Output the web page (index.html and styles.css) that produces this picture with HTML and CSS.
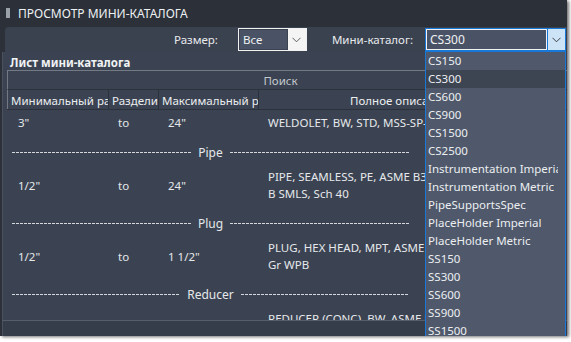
FILE: index.html
```html
<!DOCTYPE html>
<html lang="ru">
<head>
<meta charset="utf-8">
<link rel="stylesheet" href="styles.css">
</head>
<body>
<div class="window">
  <div class="titlebar">
    <span class="grip"></span>
    <span class="title">ПРОСМОТР МИНИ-КАТАЛОГА</span>
  </div>
  <div class="toolbar">
    <span class="lbl lbl-size">Размер:</span>
    <div class="select sel-size">
      <span class="val">Все</span>
      <span class="arrow"><svg width="9" height="6" viewBox="0 0 9 6"><path d="M0.5 0.8 L4.5 4.8 L8.5 0.8" fill="none" stroke="#5a5f66" stroke-width="1"/></svg></span>
    </div>
    <span class="lbl lbl-cat">Мини-каталог:</span>
    <div class="select sel-cat">
      <span class="val">CS300</span>
      <span class="arrow"><svg width="9" height="6" viewBox="0 0 9 6"><path d="M0.5 0.8 L4.5 4.8 L8.5 0.8" fill="none" stroke="#3c4048" stroke-width="1"/></svg></span>
    </div>
  </div>
  <div class="sheet">
    <div class="sheet-title">Лист мини-каталога</div>
    <div class="grid">
      <div class="search">Поиск</div>
      <div class="hdr">
        <div class="c c1">Минимальный размер</div>
        <div class="c c2">Разделитель</div>
        <div class="c c3">Максимальный размер</div>
        <div class="c c4 center">Полное описание</div>
      </div>
      <div class="row">
        <div class="c c1">3"</div>
        <div class="c c2">to</div>
        <div class="c c3">24"</div>
        <div class="c c4">WELDOLET, BW, STD, MSS-SP-97</div>
      </div>
      <div class="sep"><span class="dash"></span><span class="sep-lbl">Pipe</span><span class="dash"></span></div>
      <div class="row">
        <div class="c c1">1/2"</div>
        <div class="c c2">to</div>
        <div class="c c3">24"</div>
        <div class="c c4 wrap">PIPE, SEAMLESS, PE, ASME B36<br>B SMLS, Sch 40</div>
      </div>
      <div class="sep"><span class="dash"></span><span class="sep-lbl">Plug</span><span class="dash"></span></div>
      <div class="row">
        <div class="c c1">1/2"</div>
        <div class="c c2">to</div>
        <div class="c c3">1 1/2"</div>
        <div class="c c4 wrap">PLUG, HEX HEAD, MPT, ASME B16<br>Gr WPB</div>
      </div>
      <div class="sep"><span class="dash"></span><span class="sep-lbl">Reducer</span><span class="dash"></span></div>
      <div class="row">
        <div class="c c1"></div>
        <div class="c c2"></div>
        <div class="c c3"></div>
        <div class="c c4 wrap">REDUCER (CONC), BW, ASME B16.9<br>&nbsp;</div>
      </div>
    </div>
  </div>
  <div class="footer"></div>
  <ul class="dropdown">
    <li>CS150</li>
    <li class="hl">CS300</li>
    <li>CS600</li>
    <li>CS900</li>
    <li>CS1500</li>
    <li>CS2500</li>
    <li>Instrumentation Imperial</li>
    <li>Instrumentation Metric</li>
    <li>PipeSupportsSpec</li>
    <li>PlaceHolder Imperial</li>
    <li>PlaceHolder Metric</li>
    <li>SS150</li>
    <li>SS300</li>
    <li>SS600</li>
    <li>SS900</li>
    <li>SS1500</li>
  </ul>
</div>
</body>
</html>
```

FILE: styles.css
```css
* { box-sizing: border-box; }
html, body { margin: 0; padding: 0; }
body {
  background: #ffffff;
  width: 571px;
  height: 342px;
  overflow: hidden;
  font-family: "Noto Sans", "Open Sans", sans-serif;
  font-size: 11.5px;
  color: #e6e8eb;
}
.window {
  position: relative;
  width: 567px;
  height: 336px;
  background: #2b3039;
  display: flex;
  flex-direction: column;
  box-shadow: 2px 1px 3px rgba(0,0,0,0.55);
  overflow: hidden;
}
.titlebar {
  height: 27px;
  flex: none;
  display: flex;
  align-items: center;
  padding-left: 6px;
  padding-bottom: 1px;
}
.grip {
  width: 4px;
  height: 10px;
  margin-right: 8px;
  background-image: radial-gradient(circle, #9aa0a8 0.8px, transparent 1px);
  background-size: 2px 2px;
}
.title {
  font-size: 12px;
  color: #eef0f2;
}
.toolbar {
  height: 25px;
  flex: none;
  margin-left: 5px;
  background: #3a4250;
  border-top-left-radius: 4px;
  display: flex;
  align-items: center;
  justify-content: flex-end;
  padding-right: 1px;
}
.lbl { color: #e8eaed; }
.lbl-size { margin-right: 20px; }
.lbl-cat { margin-left: 25px; margin-right: 12px; }
.select {
  height: 23px;
  display: flex;
  border: 1px solid #f2f2f2;
}
.select .val {
  flex: 1;
  background: #4a5366;
  border: 1px solid #3a4150;
  padding-left: 3px;
  line-height: 19px;
  color: #f0f2f4;
}
.select .arrow {
  width: 18px;
  display: flex;
  align-items: center;
  justify-content: center;
  background: #f4f4f4;
}
.sel-size { width: 69px; }
.sel-cat {
  width: 141px;
  border-color: #1778d8;
}
.sel-cat .val {
  border: 1px solid #f2f2f2;
  font-size: 12px;
  line-height: 19px;
}
.sel-cat .arrow {
  background: #cde3f6;
  border-left: 1px solid #1778d8;
}
.sheet {
  flex: 1;
  margin-left: 2px;
  background: #3b4352;
  border-left: 1px solid #4b525d;
  display: flex;
  flex-direction: column;
  overflow: hidden;
  padding-top: 2px;
}
.sheet-title {
  font-weight: bold;
  height: 16px;
  line-height: 17px;
  padding-left: 7px;
  color: #f0f2f4;
}
.grid {
  margin-left: 4px;
}
.search {
  height: 20px;
  line-height: 20px;
  text-align: center;
  color: #c4c8ce;
  border-top: 1px solid #737a84;
  border-left: 1px solid #737a84;
  border-bottom: 1px solid #2c323b;
  background: #3b4352;
  padding-right: 14px;
}
.hdr {
  display: flex;
  height: 20px;
  border-bottom: 1px solid #2c323b;
}
.hdr .c {
  line-height: 21px;
  padding-left: 3px;
  border-left: 1px solid #2c323b;
  overflow: hidden;
  white-space: nowrap;
  color: #eceef0;
}
.hdr .c1 { border-left: 1px solid #737a84; }
.c1 { width: 101px; flex: none; }
.c2 { width: 50px; flex: none; }
.c3 { width: 100px; flex: none; }
.c4 { width: 282px; flex: none; }
.hdr .c4.center { text-align: center; padding-left: 0; }
.row {
  display: flex;
  align-items: center;
  padding: 4px 0 9px;
}
.row .c {
  padding-left: 10px;
  line-height: 17px;
  white-space: nowrap;
  overflow: hidden;
}
.row .c1 { padding-left: 11px; }
.sep {
  height: 24px;
  width: 397px;
  margin-left: 5px;
  display: flex;
  align-items: center;
}
.dash {
  flex: 1;
  height: 1px;
  margin-top: 1px;
  background: repeating-linear-gradient(to right, #d4d7db 0 3px, transparent 3px 4px);
}
.sep-lbl { padding: 0 7px; color: #e6e8eb; font-size: 12px; }
.footer {
  height: 16px;
  flex: none;
  margin-left: 2px;
  background: #363d4a;
  border-top: 1px solid #575e69;
  border-left: 1px solid #4b525d;
}
.dropdown {
  position: absolute;
  left: 425px;
  top: 51px;
  width: 141px;
  height: 300px;
  margin: 0;
  padding: 0;
  list-style: none;
  background: #4f596b;
  border: 1px solid #1778d8;
}
.dropdown li {
  height: 18px;
  line-height: 18px;
  padding-left: 2px;
  margin-right: 7px;
  white-space: nowrap;
  overflow: hidden;
  color: #eceef1;
  font-size: 11.5px;
}
.dropdown li.hl { background: #3d4452; margin-right: 0; }
```
